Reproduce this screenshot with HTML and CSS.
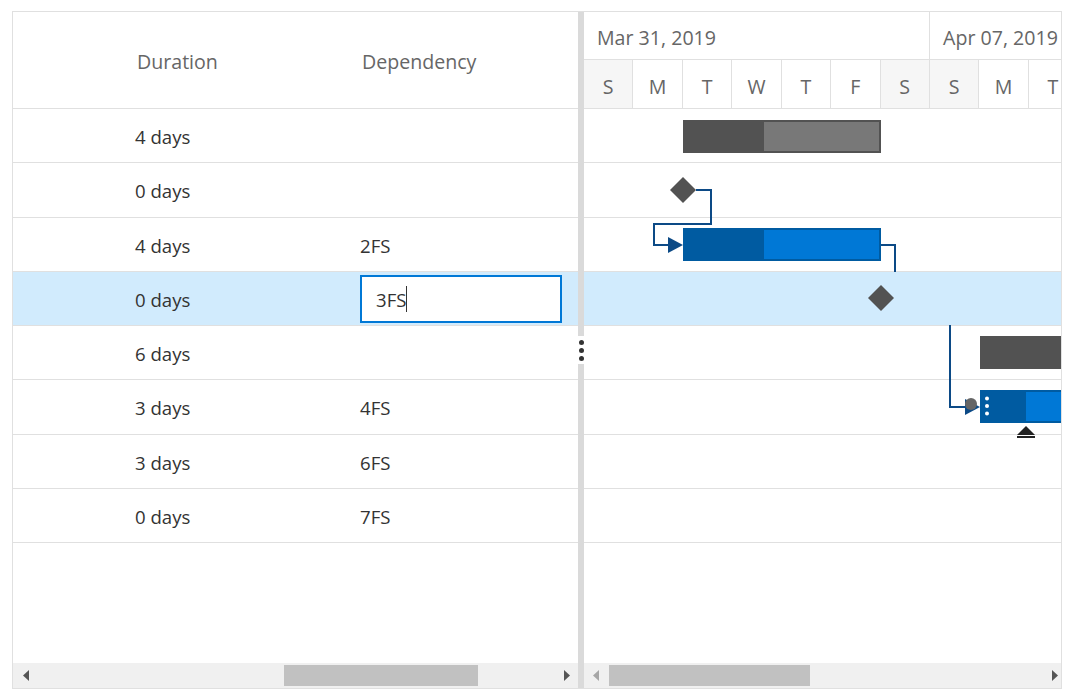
FILE: index.html
```
<!DOCTYPE html>
<html>
<head>
<meta charset="utf-8">
<link rel="stylesheet" href="styles.css">
</head>
<body>
<div class="gantt">
  <div class="grid-pane">
    <div class="grid-header">
      <div class="col-spacer"></div>
      <div class="col-dur hcell">Duration</div>
      <div class="col-dep hcell">Dependency</div>
    </div>
    <div class="grid-body">
      <div class="grow"><div class="col-spacer"></div><div class="col-dur">4 days</div><div class="col-dep"></div></div>
      <div class="grow"><div class="col-spacer"></div><div class="col-dur">0 days</div><div class="col-dep"></div></div>
      <div class="grow"><div class="col-spacer"></div><div class="col-dur">4 days</div><div class="col-dep">2FS</div></div>
      <div class="grow selected"><div class="col-spacer"></div><div class="col-dur">0 days</div><div class="col-dep"><div class="edit-box">3FS<span class="caret"></span></div></div></div>
      <div class="grow"><div class="col-spacer"></div><div class="col-dur">6 days</div><div class="col-dep"></div></div>
      <div class="grow"><div class="col-spacer"></div><div class="col-dur">3 days</div><div class="col-dep">4FS</div></div>
      <div class="grow"><div class="col-spacer"></div><div class="col-dur">3 days</div><div class="col-dep">6FS</div></div>
      <div class="grow"><div class="col-spacer"></div><div class="col-dur">0 days</div><div class="col-dep">7FS</div></div>
    </div>
    <div class="scrollbar grid-scroll">
      <svg class="arrow" width="6" height="11" viewBox="0 0 6 11"><path d="M6 0 L0 5.5 L6 11 Z" fill="#555"/></svg>
      <div class="track"><div class="thumb"></div></div>
      <svg class="arrow" width="6" height="11" viewBox="0 0 6 11"><path d="M0 0 L6 5.5 L0 11 Z" fill="#555"/></svg>
    </div>
  </div>

  <div class="splitter">
    <div class="split-top"></div>
    <div class="split-grip"><span></span><span></span><span></span></div>
    <div class="split-bottom"></div>
  </div>

  <div class="chart-pane">
    <div class="timeline">
      <div class="tier-top">
        <div class="week first">Mar 31, 2019</div>
        <div class="week">Apr 07, 2019</div>
      </div>
      <div class="tier-bottom">
        <div class="day weekend">S</div>
        <div class="day">M</div>
        <div class="day">T</div>
        <div class="day">W</div>
        <div class="day">T</div>
        <div class="day">F</div>
        <div class="day weekend">S</div>
        <div class="day weekend">S</div>
        <div class="day">M</div>
        <div class="day">T</div>
      </div>
    </div>
    <div class="chart-body">
      <div class="crow"></div>
      <div class="crow"></div>
      <div class="crow"></div>
      <div class="crow selected"></div>
      <div class="crow"></div>
      <div class="crow"></div>
      <div class="crow"></div>
      <div class="crow"></div>
      <svg class="chart-layer" width="477" height="554" viewBox="0 0 477 554">
        <rect x="99" y="11" width="198" height="33" fill="#525252"/>
        <rect x="180" y="13" width="115" height="29" fill="#787878"/>
        <polygon points="99,68 112,81 99,94 86,81" fill="#525252"/>
        <polyline points="112,81 127,81 127,115 70,115 70,136 86,136" fill="none" stroke="#0c4a86" stroke-width="2"/>
        <polygon points="84,128 99,136 84,144" fill="#0c4a86"/>
        <rect x="99" y="119" width="198" height="33" fill="#005ba1"/>
        <rect x="180" y="121" width="115" height="29" fill="#0078d6"/>
        <polyline points="297,136 311,136 311,163" fill="none" stroke="#0c4a86" stroke-width="2"/>
        <polygon points="297,176 310,189 297,202 284,189" fill="#525252"/>
        <polyline points="366,216 366,298 383,298" fill="none" stroke="#0c4a86" stroke-width="2"/>
        <polygon points="381,290 396,298 381,306" fill="#0c4a86"/>
        <rect x="396" y="227" width="120" height="33" fill="#525252"/>
        <rect x="396" y="281" width="120" height="33" fill="#005ba1"/>
        <rect x="442" y="283" width="80" height="29" fill="#0078d6"/>
        <circle cx="403" cy="289.5" r="2" fill="#fff"/>
        <circle cx="403" cy="297" r="2" fill="#fff"/>
        <circle cx="403" cy="304.5" r="2" fill="#fff"/>
        <circle cx="387" cy="295" r="6" fill="#666"/>
        <polygon points="442,317 451,326 433,326" fill="#222"/>
        <rect x="433" y="327" width="18" height="2" fill="#222"/>
      </svg>
    </div>
    <div class="scrollbar chart-scroll">
      <svg class="arrow" width="6" height="11" viewBox="0 0 6 11"><path d="M6 0 L0 5.5 L6 11 Z" fill="#a6a6a6"/></svg>
      <div class="track"><div class="thumb"></div></div>
      <svg class="arrow" width="6" height="11" viewBox="0 0 6 11"><path d="M0 0 L6 5.5 L0 11 Z" fill="#555"/></svg>
    </div>
  </div>
</div>
</body>
</html>
```
FILE: styles.css
```
html, body {
  margin: 0;
  padding: 0;
  background: #fff;
}
body {
  font-family: "Open Sans", "Noto Sans", sans-serif;
  color: #333;
}
.gantt {
  margin: 11px 0 0 12px;
  width: 1050px;
  height: 678px;
  box-sizing: border-box;
  border: 1px solid #e0e0e0;
  display: flex;
  overflow: hidden;
}
.grid-pane {
  width: 565px;
  display: flex;
  flex-direction: column;
  flex: none;
}
.grid-header {
  height: 97px;
  box-sizing: border-box;
  border-bottom: 1px solid #e0e0e0;
  display: flex;
  align-items: center;
  color: #666;
  font-size: 19.6px;
}
.hcell {
  padding-left: 2px;
  padding-top: 2px;
}
.col-spacer {
  width: 122px;
  flex: none;
}
.col-dur {
  width: 225px;
  flex: none;
  box-sizing: border-box;
}
.col-dep {
  flex: 1;
  box-sizing: border-box;
}
.grid-body {
  flex: 1;
}
.grow {
  height: 54.25px;
  box-sizing: border-box;
  border-bottom: 1px solid #e0e0e0;
  display: flex;
  align-items: center;
  font-size: 18.6px;
  padding-top: 2px;
}
.grow.selected {
  background: #d1ebfd;
}
.edit-box {
  width: 202px;
  height: 48px;
  box-sizing: border-box;
  border: 2px solid #0078d6;
  background: #fff;
  display: flex;
  align-items: center;
  padding-left: 14px;
}
.caret {
  display: inline-block;
  width: 0;
  height: 26px;
  border-left: 1px solid #333;
}
.scrollbar {
  height: 25px;
  flex: none;
  background: #f0f0f0;
  display: flex;
  align-items: center;
}
.scrollbar .arrow {
  flex: none;
  display: block;
}
.track {
  flex: 1;
  height: 21px;
}
.thumb {
  height: 21px;
  background: #c1c1c1;
}
.grid-scroll {
  padding: 0 8px 0 10px;
}
.grid-scroll .thumb {
  margin-left: 255px;
  width: 194px;
}
.chart-scroll {
  padding: 0 3px 0 9px;
}
.chart-scroll .thumb {
  margin-left: 10px;
  width: 201px;
}
.splitter {
  width: 6px;
  flex: none;
  display: flex;
  flex-direction: column;
}
.split-top {
  height: 324px;
  background: #dadada;
}
.split-bottom {
  flex: 1;
  background: #dadada;
}
.split-grip {
  height: 28px;
  display: flex;
  flex-direction: column;
  align-items: center;
  justify-content: center;
  gap: 3px;
}
.split-grip span {
  width: 5px;
  height: 5px;
  border-radius: 50%;
  background: #333;
}
.chart-pane {
  width: 477px;
  flex: none;
  display: flex;
  flex-direction: column;
  overflow: hidden;
}
.timeline {
  height: 97px;
  flex: none;
  box-sizing: border-box;
  border-bottom: 1px solid #e0e0e0;
  color: #666;
  font-size: 19.6px;
}
.tier-top {
  height: 48px;
  box-sizing: border-box;
  border-bottom: 1px solid #e0e0e0;
  display: flex;
}
.week {
  flex: none;
  width: 346px;
  box-sizing: border-box;
  border-right: 1px solid #e0e0e0;
  padding: 12px 0 0 13px;
  white-space: nowrap;
}
.tier-bottom {
  height: 48px;
  display: flex;
}
.day {
  flex: none;
  width: 49.43px;
  box-sizing: border-box;
  border-right: 1px solid #e0e0e0;
  display: flex;
  align-items: center;
  justify-content: center;
  padding-top: 4px;
}
.day.weekend {
  background: #f6f6f6;
}
.chart-body {
  flex: 1;
  position: relative;
}
.crow {
  height: 54.25px;
  box-sizing: border-box;
  border-bottom: 1px solid #e0e0e0;
}
.crow.selected {
  background: #d1ebfd;
}
.chart-layer {
  position: absolute;
  left: 0;
  top: 0;
}
```
